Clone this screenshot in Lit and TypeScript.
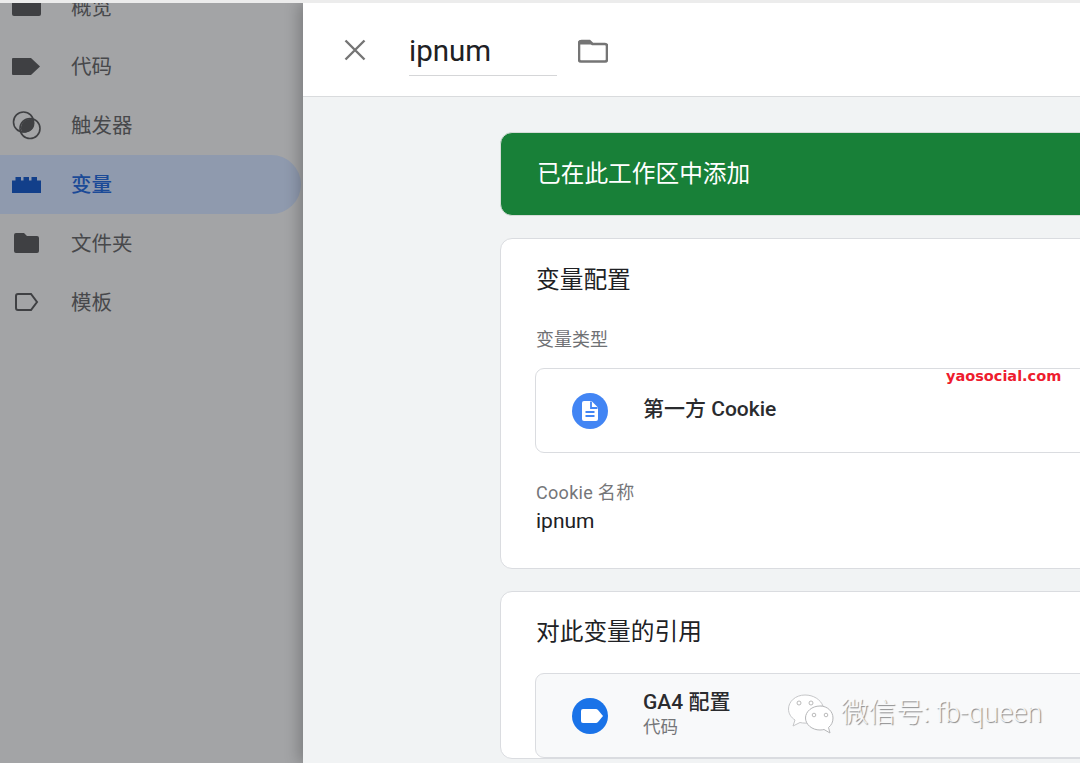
import { LitElement, html, css } from "lit";
import { customElement } from "lit/decorators.js";

@customElement("app-root")
export class AppRoot extends LitElement {
  static styles = css`
    :host {
      display: block;
      width: 1080px;
      height: 763px;
      overflow: hidden;
      position: relative;
      background: #ececec;
      font-family: Roboto, "Noto Sans CJK SC", sans-serif;
    }
    .shell {
      display: flex;
      height: 760px;
      margin-top: 3px;
      overflow: hidden;
    }
    .side {
      width: 303px;
      flex: none;
      background: #a3a4a6;
      overflow: hidden;
    }
    .nav {
      margin-top: -25px;
      padding-right: 2px;
    }
    .row {
      height: 59px;
      display: flex;
      align-items: center;
      color: #47484b;
      font-size: 20.500px;
      border-radius: 0 30px 30px 0;
    }
    .row.active {
      background: #8f9aae;
      color: #1b4a97;
      font-weight: 500;
    }
    .row svg {
      width: 54px;
      height: 59px;
      flex: none;
      fill: #3f4043;
    }
    .row.active svg {
      fill: #123f8a;
    }
    .row span {
      margin: 0 0 4px 17px;
    }
    .panel {
      flex: 1;
      min-width: 0;
      background: #f1f3f4;
      box-shadow: -4px 0 14px rgba(0, 0, 0, 0.24);
      position: relative;
    }
    .head {
      height: 93px;
      background: #fff;
      border-bottom: 1px solid #d9dbdd;
      display: flex;
      align-items: center;
      box-sizing: content-box;
    }
    .close {
      width: 24px;
      height: 24px;
      margin-left: 40px;
      stroke: #757575;
      stroke-width: 2.400;
      fill: none;
    }
    .name {
      margin: 4px 0 0 42px;
      width: 148px;
      height: 48px;
      box-sizing: border-box;
      font-size: 29.500px;
      line-height: 46px;
      color: #202124;
      border-bottom: 1px solid #d5d6d8;
    }
    .folder {
      width: 30px;
      height: 24px;
      margin: 2px 0 0 21px;
      fill: none;
      stroke: #757575;
      stroke-width: 2.600;
    }
    .content {
      padding: 35px 0 0 197px;
      width: 640px;
      display: flex;
      flex-direction: column;
      gap: 22px;
    }
    .banner {
      height: 84px;
      box-sizing: border-box;
      background: #188038;
      border: 1px solid #d5dcd8;
      border-radius: 12px;
      color: #fff;
      font-size: 23.700px;
      display: flex;
      align-items: center;
      padding: 0 0 5px 36px;
    }
    .card {
      background: #fff;
      border: 1px solid #dadce0;
      border-radius: 12px;
      padding: 0 0 0 34px;
    }
    .title {
      font-size: 23.700px;
      color: #202124;
      line-height: 32px;
      margin: 25px 0 0 1px;
    }
    .title.refs {
      margin-top: 24px;
    }
    .label {
      font-size: 18px;
      color: #6f7174;
      line-height: 24px;
      margin: 32px 0 0 1px;
    }
    .box {
      height: 85px;
      box-sizing: border-box;
      border: 1px solid #dadce0;
      border-radius: 9px;
      display: flex;
      align-items: center;
      padding-left: 35.500px;
      margin-top: 16px;
      background: #fff;
    }
    .box.muted {
      background: #f8f9fa;
      margin-top: 25px;
    }
    .box svg {
      width: 36px;
      height: 36px;
      flex: none;
    }
    .box-text {
      margin: 0 0 3px 35.500px;
      color: #2a2b2e;
      font-size: 21px;
      font-weight: 500;
      line-height: 26px;
    }
    .box-text small {
      display: block;
      font-size: 17.500px;
      font-weight: 400;
      color: #757679;
      line-height: 24px;
    }
    .cookie-label {
      margin: 28px 0 0 1px;
      font-size: 18px;
      letter-spacing: 0.3px;
      line-height: 24px;
      color: #757679;
    }
    .cookie-value {
      font-size: 21px;
      line-height: 30px;
      color: #202124;
      margin: 1px 0 32px 1px;
    }
    .site {
      position: absolute;
      left: 946px;
      top: 367px;
      font-family: "DejaVu Sans", sans-serif;
      font-weight: 700;
      font-size: 14.500px;
      line-height: 18px;
      color: #ee1c2e;
      white-space: nowrap;
    }
    .wechat {
      position: absolute;
      left: 787px;
      top: 691px;
      display: flex;
      align-items: center;
      gap: 7px;
      color: rgba(255, 255, 255, 0.85);
      font-size: 27.500px;
      font-weight: 300;
      line-height: 40px;
      text-shadow: 1px 1px 1px rgba(0, 0, 0, 0.45);
      white-space: nowrap;
    }
    .wechat svg {
      width: 47px;
      height: 42px;
      margin-top: 2px;
    }
  `;

  private renderNav() {
    return html`<div class="nav">
      <div class="row">
        <svg viewBox="0 0 54 59"><rect x="12" y="14" width="29" height="24" rx="2" /></svg>
        <span>概览</span>
      </div>
      <div class="row">
        <svg viewBox="0 0 54 59"><path d="M13 21h18l9 8.500-9 8.500H13q-1 0-1-1V22q0-1 1-1z" /></svg>
        <span>代码</span>
      </div>
      <div class="row">
        <svg viewBox="0 0 54 59">
          <circle cx="23.500" cy="26" r="10" fill="none" stroke="#3f4043" stroke-width="1.600" />
          <circle cx="30" cy="32.500" r="10" fill="none" stroke="#3f4043" stroke-width="1.600" />
          <path d="M21 32.500c0-5.500 4-9.500 9-9.500 1.500 0 2.800.3 3.400 1 .6 1 1 2.200 1 3.500 0 5.500-4.400 9-9.400 9-1.500 0-2.700-.4-3.400-1-.4-.9-.6-1.900-.6-3z" />
        </svg>
        <span>触发器</span>
      </div>
      <div class="row active">
        <svg viewBox="0 0 54 59">
          <path d="M12 38V25.500h3.500V22h5.500v3.500h2.500V22h5.500v3.500h2.500V22h5.500v3.500H41V38z" />
        </svg>
        <span>变量</span>
      </div>
      <div class="row">
        <svg viewBox="0 0 54 59">
          <path d="M16 19h8l3 3h10q2 0 2 2v13q0 2-2 2H16q-2 0-2-2V21q0-2 2-2z" />
        </svg>
        <span>文件夹</span>
      </div>
      <div class="row">
        <svg viewBox="0 0 54 59">
          <path d="M18 21h13l6 8-6 8H18q-2 0-2-2V23q0-2 2-2z" fill="none" stroke="#3f4043" stroke-width="2" />
        </svg>
        <span>模板</span>
      </div>
    </div>`;
  }

  render() {
    return html`
      <div class="shell">
        <div class="side">${this.renderNav()}</div>
        <div class="panel">
          <div class="head">
            <svg class="close" viewBox="0 0 24 24"><path d="M2.500 2.500l19 19M21.500 2.500l-19 19" /></svg>
            <div class="name">ipnum</div>
            <svg class="folder" viewBox="0 0 30 24">
              <path d="M3.500 2h8l3 3h12.500q2 0 2 2v13.500q0 2-2 2H3q-2 0-2-2V4q0-2 2.500-2z" />
              <path d="M3 1h8.500l3.500 4.500H1V3q0-2 2-2z" fill="#757575" stroke="none" />
            </svg>
          </div>
          <div class="content">
            <div class="banner">已在此工作区中添加</div>
            <div class="card">
              <div class="title">变量配置</div>
              <div class="label">变量类型</div>
              <div class="box">
                <svg viewBox="0 0 36 36">
                  <circle cx="18" cy="18" r="18" fill="#4285f4" />
                  <path d="M12 8h7.500l6.500 6.500V26q0 2-2 2H12q-2 0-2-2V10q0-2 2-2z" fill="#fff" />
                  <path d="M19 8.500V15h6.500M13.500 19h9M13.500 23h9" fill="none" stroke="#4285f4" stroke-width="1.800" />
                </svg>
                <div class="box-text">第一方 Cookie</div>
              </div>
              <div class="cookie-label">Cookie 名称</div>
              <div class="cookie-value">ipnum</div>
            </div>
            <div class="card">
              <div class="title refs">对此变量的引用</div>
              <div class="box muted">
                <svg viewBox="0 0 36 36">
                  <circle cx="18" cy="18" r="18" fill="#1a73e8" />
                  <path d="M11 11h13q1 0 2 1l5 6-5 6q-1 1-2 1H11q-2 0-2-2V13q0-2 2-2z" fill="#fff" />
                </svg>
                <div class="box-text">GA4 配置<small>代码</small></div>
              </div>
            </div>
          </div>
        </div>
      </div>
      <div class="site">yaosocial.com</div>
      <div class="wechat">
        <svg viewBox="0 0 47 42">
          <path d="M18 2C8.500 2 1.500 8.500 1.500 16c0 4.500 2.500 8.500 6.500 11l-2 6 7-3.500c1.500.4 3 .6 5 .6 1 0 2 0 3-.2C20 22 27 13 36 13 33.500 6.500 26.500 2 18 2z" fill="#fff" stroke="#c6c7c9" />
          <path d="M33 13c-8 0-14.500 5.500-14.500 12S25 37 33 37c1.500 0 3-.2 4-.5l6 3.500-1.500-5.500c3-2.300 4.500-5.500 4.500-9.500 0-6.500-5.500-12-13-12z" fill="#fff" stroke="#b5b6b8" />
          <circle cx="12" cy="10" r="2" fill="#fff" stroke="#aaa" stroke-width=".8" />
          <circle cx="24" cy="10" r="2" fill="#fff" stroke="#aaa" stroke-width=".8" />
          <circle cx="27" cy="22" r="1.800" fill="#fff" stroke="#aaa" stroke-width=".8" />
          <circle cx="39" cy="22" r="1.800" fill="#fff" stroke="#aaa" stroke-width=".8" />
        </svg>
        <span>微信号: fb-queen</span>
      </div>
    `;
  }
}
